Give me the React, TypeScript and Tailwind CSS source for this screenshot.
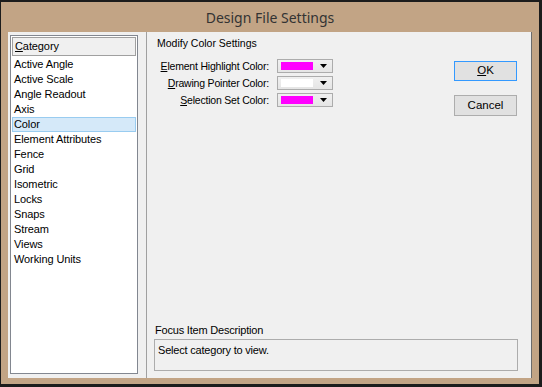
import React from "react";

const categories = [
  "Active Angle",
  "Active Scale",
  "Angle Readout",
  "Axis",
  "Color",
  "Element Attributes",
  "Fence",
  "Grid",
  "Isometric",
  "Locks",
  "Snaps",
  "Stream",
  "Views",
  "Working Units",
];

const colorRows = [
  { key: "E", rest: "lement Highlight Color:", color: "bg-[#ff00ff]" },
  { key: "D", rest: "rawing Pointer Color:", color: "bg-white" },
  { key: "S", rest: "election Set Color:", color: "bg-[#ff00ff]" },
];

function ColorCombo({ color }: { color: string }) {
  return (
    <div className="flex items-center w-[56px] h-[14px] border border-[#acacac] bg-gradient-to-b from-[#f0f0f0] to-[#e5e5e5]">
      <div className={`ml-[3px] w-[32px] h-[8px] ${color}`} />
      <svg className="ml-auto mr-[5px]" width="7" height="4" viewBox="0 0 7 4">
        <path d="M0 0H7L3.5 4Z" fill="#000" />
      </svg>
    </div>
  );
}

export default function App() {
  return (
    <div className="w-[542px] h-[387px] bg-[#1c1c1c] overflow-hidden font-['Liberation_Sans',Arial,sans-serif] text-[11px] text-black">
      <div className="mt-[2px] ml-[1px] w-[538px] h-[382px] bg-[#c2a485] flex flex-col">
        <div className="h-[30px] flex items-center justify-center font-['Noto_Sans',sans-serif] text-[14px] text-[#333]">
          Design File Settings
        </div>

        <div className="ml-[7px] w-[524px] h-[346px] bg-[#f0f0f0] border-r border-[#6b6b6b] flex">
          {/* category list */}
          <div className="w-[139px] border-r border-[#a0a0a0] pl-[2px] pt-[3px] pb-[4px]">
            <div className="w-[128px] h-full border border-[#828790] bg-white p-[1px] tracking-[-0.1px]">
              <div className="h-[19px] mb-[1px] border border-[#a0a0a0] bg-[#f0f0f0] pl-[2px] leading-[17px]">
                <span className="underline">C</span>ategory
              </div>
              {categories.map((c) => (
                <div
                  key={c}
                  className={`h-[15px] leading-[13px] pl-[1px] border ${
                    c === "Color" ? "bg-[#d5e9f9] border-[#99ccf0]" : "border-transparent"
                  }`}
                >
                  {c}
                </div>
              ))}
            </div>
          </div>

          {/* settings */}
          <div className="flex-1 flex flex-col">
            <div className="flex">
              <div className="flex-1">
                <div className="pl-[10px] pt-[4px] leading-[14px] text-[10.5px]">Modify Color Settings</div>
                <div className="mt-[9px] flex flex-col gap-[3px] text-[10.5px] tracking-[-0.2px]">
                  {colorRows.map((r) => (
                    <div key={r.key} className="flex items-center h-[14px]">
                      <div className="w-[122px] text-right leading-[14px]">
                        <span className="underline">{r.key}</span>
                        {r.rest}
                      </div>
                      <div className="ml-[8px]">
                        <ColorCombo color={r.color} />
                      </div>
                    </div>
                  ))}
                </div>
              </div>
              <div className="w-[63px] mr-[14px] pt-[29px] flex flex-col">
                <button className="h-[20px] border border-[#3399ff] bg-[#e1e1e1] text-[11.5px]">
                  <span className="underline">O</span>K
                </button>
                <button className="mt-[14px] h-[21px] border border-[#adadad] bg-[#e1e1e1] text-[11.5px]">
                  Cancel
                </button>
              </div>
            </div>

            <div className="mt-auto">
              <div className="pl-[8px] leading-[14px] mb-[2px] tracking-[-0.2px]">Focus Item Description</div>
              <div className="ml-[7px] w-[364px] h-[32px] mb-[7px] border border-[#acacac] pl-[3px] pt-[3px] leading-[14px] tracking-[-0.2px]">
                Select category to view.
              </div>
            </div>
          </div>
        </div>
      </div>
    </div>
  );
}
